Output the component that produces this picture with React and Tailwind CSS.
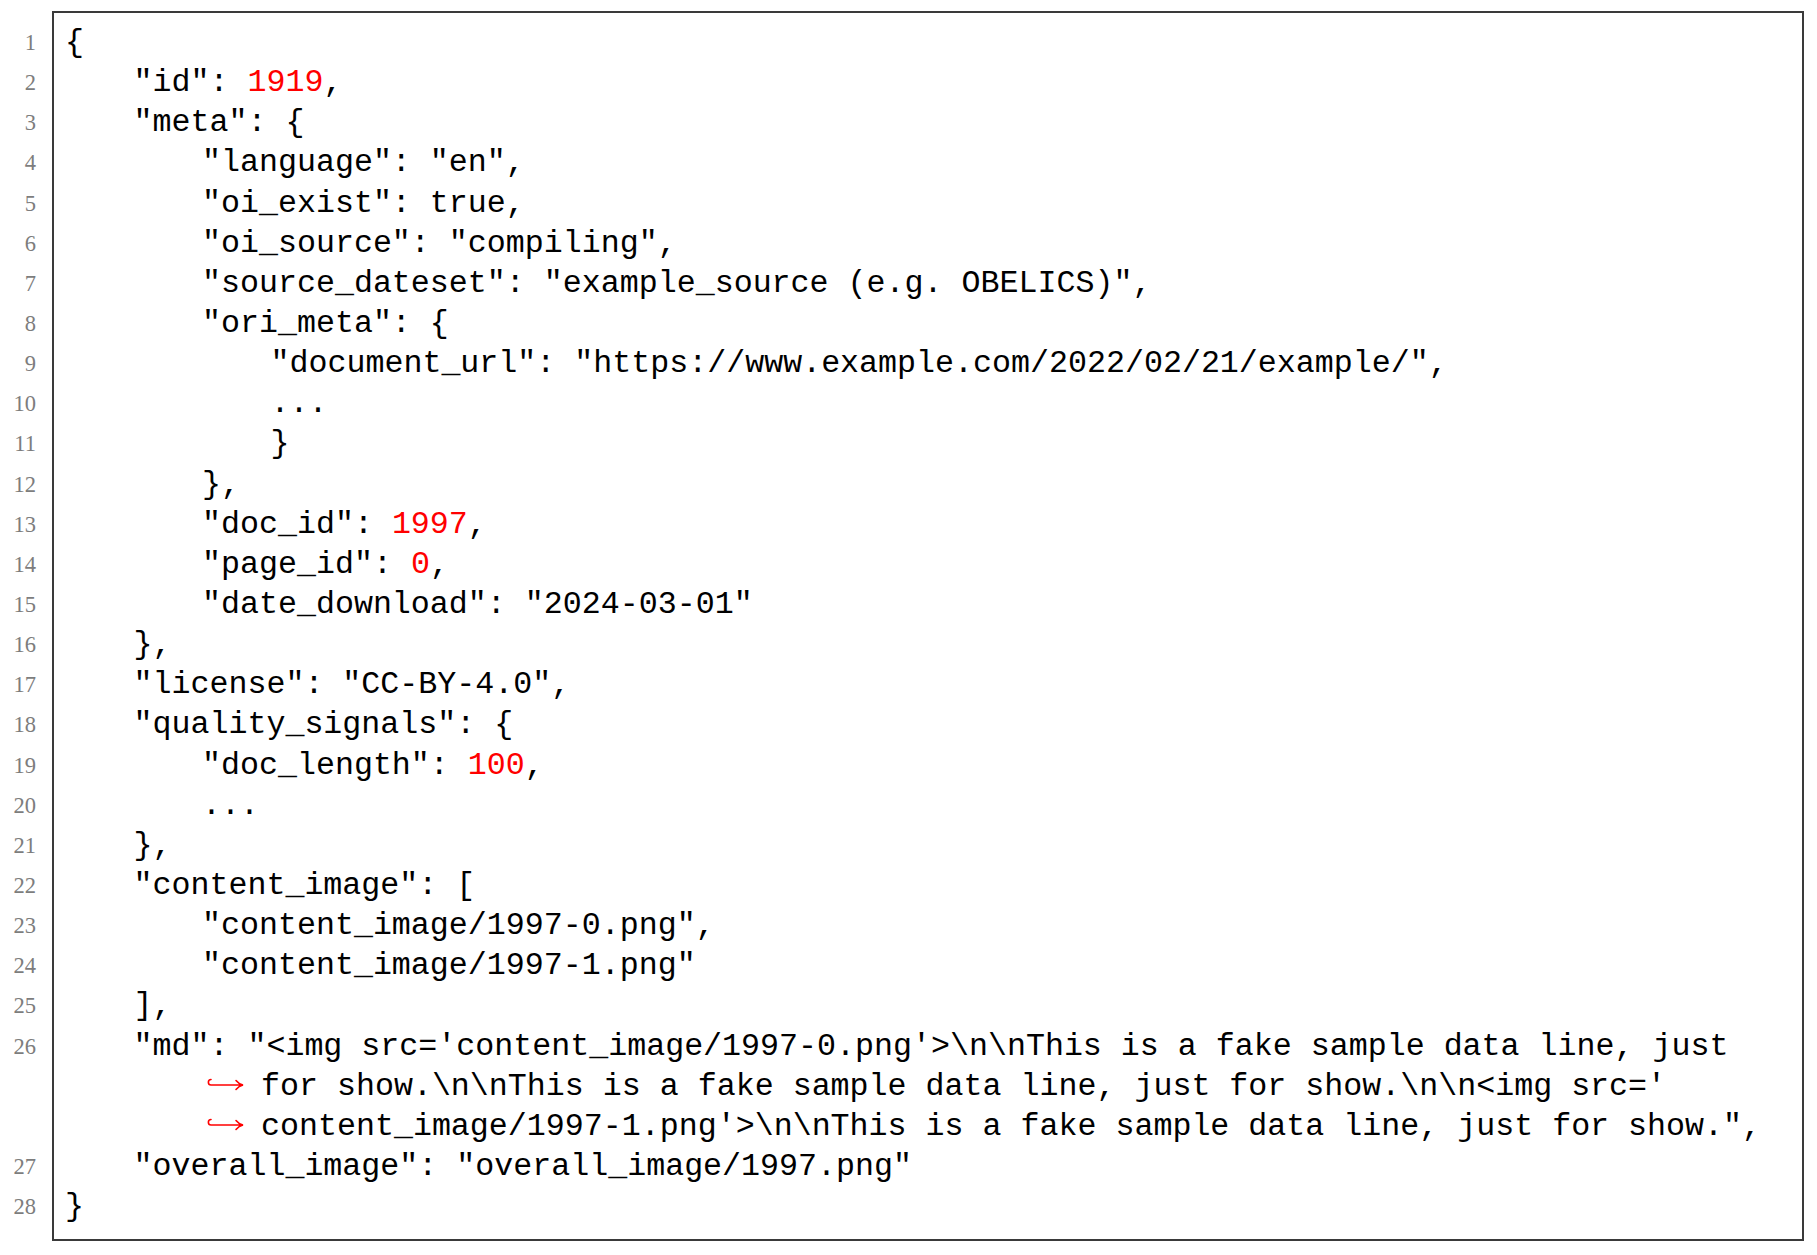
import React from "react";

const R = ({ children }) => <span className="text-[#ff0000]">{children}</span>;

// each row: [lineNumber or null, indent level, content, isContinuation]
const rows = [
  [1, 0, "{"],
  [2, 1, <>"id": <R>1919</R>,</>],
  [3, 1, '"meta": {'],
  [4, 2, '"language": "en",'],
  [5, 2, '"oi_exist": true,'],
  [6, 2, '"oi_source": "compiling",'],
  [7, 2, '"source_dateset": "example_source (e.g. OBELICS)",'],
  [8, 2, '"ori_meta": {'],
  [9, 3, '"document_url": "https://www.example.com/2022/02/21/example/",'],
  [10, 3, "..."],
  [11, 3, "}"],
  [12, 2, "},"],
  [13, 2, <>"doc_id": <R>1997</R>,</>],
  [14, 2, <>"page_id": <R>0</R>,</>],
  [15, 2, '"date_download": "2024-03-01"'],
  [16, 1, "},"],
  [17, 1, '"license": "CC-BY-4.0",'],
  [18, 1, '"quality_signals": {'],
  [19, 2, <>"doc_length": <R>100</R>,</>],
  [20, 2, "..."],
  [21, 1, "},"],
  [22, 1, '"content_image": ['],
  [23, 2, '"content_image/1997-0.png",'],
  [24, 2, '"content_image/1997-1.png"'],
  [25, 1, "],"],
  [26, 1, "\"md\": \"<img src='content_image/1997-0.png'>\\n\\nThis is a fake sample data line, just"],
  [null, 2, "for show.\\n\\nThis is a fake sample data line, just for show.\\n\\n<img src='", true],
  [null, 2, "content_image/1997-1.png'>\\n\\nThis is a fake sample data line, just for show.\",", true],
  [27, 1, '"overall_image": "overall_image/1997.png"'],
  [28, 0, "}"],
];

const indent = ["pl-0", "pl-[68.5px]", "pl-[137px]", "pl-[205.5px]"];

const HookArrow = () => (
  <svg width="38" height="16" viewBox="0 0 38 16" className="inline-block ml-[4px] mr-[17px] align-middle -mt-[4px]">
    <path
      d="M5 3.5 C1.5 3.5 1.5 9 5 9 L36 9 M30 4.5 C32 7 34 8.3 37 9 C34 9.7 32 11 30 13.5"
      fill="none"
      stroke="#ff0000"
      strokeWidth="1.6"
      strokeLinecap="round"
    />
  </svg>
);

export default function App() {
  return (
    <div className="bg-white w-[1817px] h-[1255px] pt-[11px] flex">
      {/* line numbers */}
      <div className="w-[52px] pt-[12px] pr-[16px] text-right font-['Liberation_Serif',serif] text-[22.5px] text-[#7d7d7d]">
        {rows.map((r, i) => (
          <div key={i} className="h-[40.15px] leading-[40.15px]">
            {r[0] ?? "\u00a0"}
          </div>
        ))}
      </div>

      {/* code box */}
      <div className="w-[1752px] h-[1230px] border-2 border-[#3a3a3a] pt-[10px] pl-[11px] font-['Liberation_Mono',monospace] text-[31.65px] text-black">
        {rows.map((r, i) => (
          <div key={i} className={`h-[40.15px] leading-[40.15px] whitespace-pre ${indent[r[1]]}`}>
            {r[3] && <HookArrow />}
            {r[2]}
          </div>
        ))}
      </div>
    </div>
  );
}
